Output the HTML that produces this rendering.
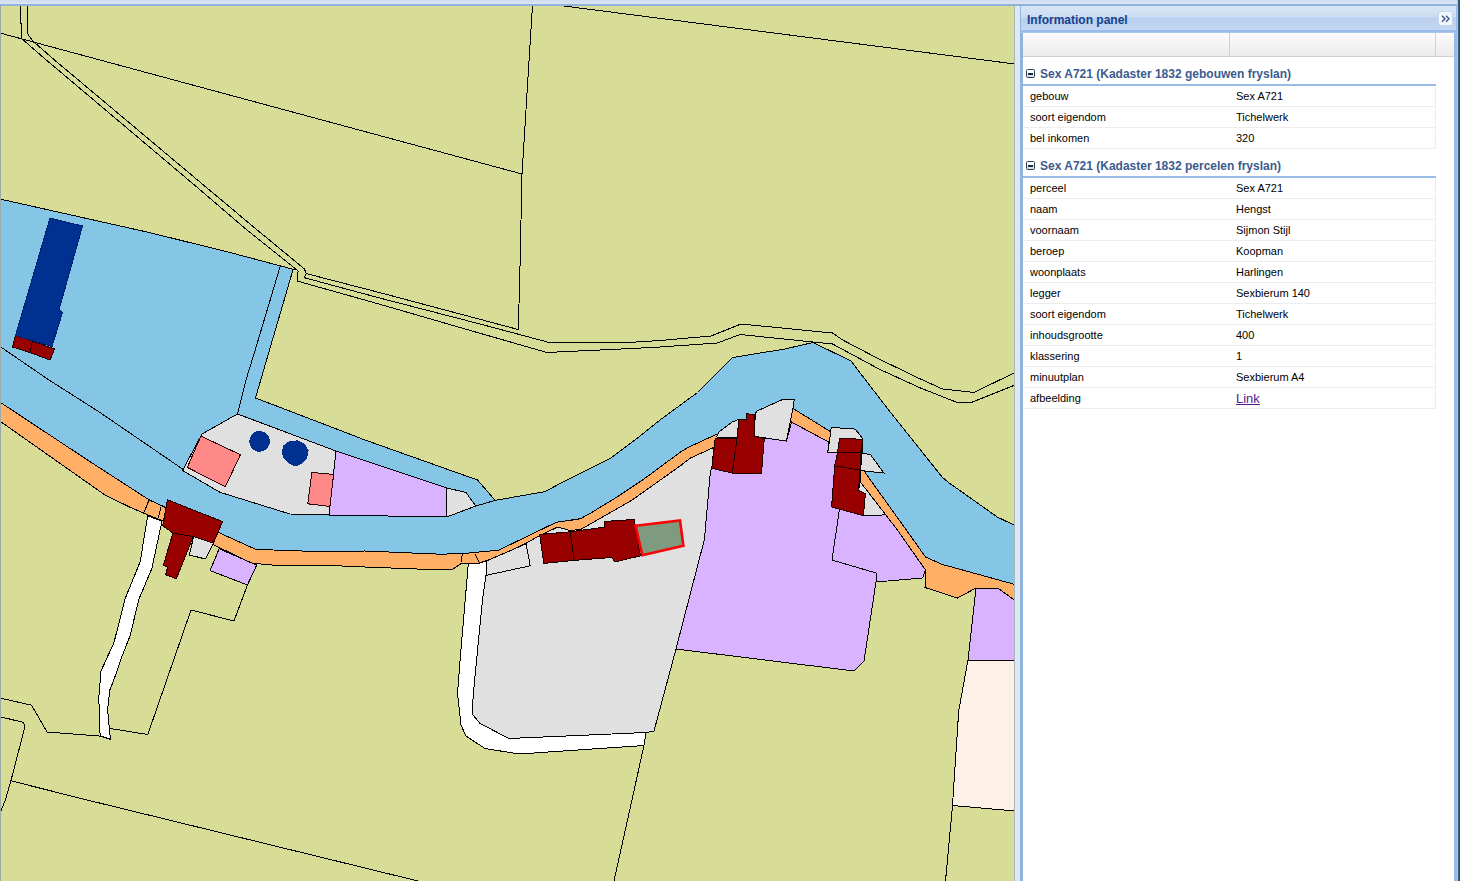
<!DOCTYPE html>
<html><head><meta charset="utf-8"><title>Information panel</title>
<style>
html,body{margin:0;padding:0;width:1460px;height:881px;overflow:hidden;background:#dfe8f6;font-family:"Liberation Sans",sans-serif;}
#top{position:absolute;left:0;top:0;width:1460px;height:4px;background:linear-gradient(#cfdcf0,#dbe5f5);}
#topline{position:absolute;left:0;top:4px;width:1460px;height:2px;background:#8fb4d8;}
#map{position:absolute;left:0;top:6px;width:1014px;height:875px;overflow:hidden;background:#d7dc97;}
#map svg{position:absolute;left:0;top:-6px;}
#mapleft{position:absolute;left:0;top:6px;width:1px;height:875px;background:#9aabaa;}
#split{position:absolute;left:1014px;top:6px;width:6px;height:875px;background:#dfe8f6;border-left:1px solid #a9b7b4;box-sizing:border-box;}
#panel{position:absolute;left:1020px;top:6px;width:437px;height:875px;background:#fff;border-left:3px solid #8fb4de;border-right:3px solid #99bbe8;box-sizing:border-box;}
#edge{position:absolute;left:1457px;top:0;width:3px;height:881px;background:linear-gradient(90deg,#a8c4ea 0,#a8c4ea 33%,#41627a 34%,#2c4a5e 100%);}
#phead{position:absolute;left:-2px;top:0;width:435px;height:24px;box-shadow:0 1px 0 #a9c6ec;background:linear-gradient(#dae6f6 0,#cddcf2 45%,#b9cfee 50%,#c3d6f1 100%);border-bottom:2px solid #99bbe8;}
#ptitle{position:absolute;left:6px;top:7px;font-weight:bold;font-size:12px;color:#15428b;white-space:nowrap;}
#tool{position:absolute;left:418px;top:6px;width:13px;height:13px;background:#f1f6fd;border-radius:2px;box-shadow:0 0 0 1px #c5d6ee;}
#ghead{position:absolute;left:0;top:27px;width:431px;height:23px;background:linear-gradient(#fbfbfb,#ececec);border-bottom:1px solid #d0d0d0;}
#ghead i{position:absolute;top:0;width:1px;height:23px;background:#d0d0d0;}
#gbody{position:absolute;left:0;top:51px;width:413px;}
.ghd{height:21px;padding-top:6px;border-bottom:2px solid #99bbe8;position:relative;}
.ghd span{position:absolute;left:17px;top:10px;font-weight:bold;font-size:12px;color:#3b5b8e;white-space:nowrap;}
.ghd b{position:absolute;left:3px;top:12px;width:7px;height:7px;border:1px solid #2c3c52;border-radius:1.5px;background:linear-gradient(#fff 40%,#cdd6e2);}
.ghd b:after{content:"";position:absolute;left:1px;top:3px;width:5px;height:2px;background:#1c2a3c;}
.row{height:19px;border-top:1px solid #fff;border-bottom:1px solid #ededed;border-right:1px solid #ededed;position:relative;font-size:11px;line-height:13px;color:#000;}
.c1{position:absolute;left:7px;top:3px;white-space:nowrap;}
.c2{position:absolute;left:213px;top:3px;white-space:nowrap;}
.c2 a{font-size:13px;color:#551a8b;text-decoration:underline;}
</style></head><body>
<div id="top"></div><div id="topline"></div>
<div id="map"><svg width="1015" height="881" viewBox="0 0 1015 881" shape-rendering="crispEdges">
<polygon points="-1,198.8 150,232.7 230,252.5 294,269.5 293,269.8 269.5,350 255.5,398 330,426.5 365,440 477.5,480 495.2,500.4 544.9,491.6 560,483.6 610.4,458.4 635,440 660,420 697.5,392.5 732.5,357.5 785,349 813,342.5 851,361 888.6,410 942.5,477.5 950,483.6 973.3,500 997.2,517 1015,525.5 1015,584.5 942.5,564.5 925.5,557 906.3,530 865.4,473 862,445 855,429 830.7,431.8 792.9,408.4 790,421 760,437 725,437 716.6,434.3 689.4,446.8 680.8,451.8 644.5,478.6 617,497 590,513.5 580.4,518.7 556.5,522.2 498.6,550.2 462.5,553.6 440,554.2 365,551 330,552 280,550.2 256,549.5 218.6,532.5 190,520 166.8,508 149,499.8 130,487.5 87.5,460 -1,401.5" fill="#85c5e5" stroke="#000"/>
<polygon points="-1,401.5 87.5,460 130,487.5 149,499.8 166.8,508 190,520 218.6,532.5 256,549.5 280,550.2 330,552 365,551 440,554.2 462.5,553.6 498.6,550.2 556.5,522.2 576.2,519.5 580.4,518.7 590,513.5 617,497 644.5,478.6 680.8,451.8 689.4,446.8 716.6,434.3 725,437 760,437 790,421 792.9,408.4 830.7,431.8 862,445 865.4,473 906.3,530 925.5,557 942.5,564.5 1015,584.5 1015,600.5 999,589 976,588 957.5,598 925,587.5 925.5,570 897.4,530 860,481.5 860,471 828.6,442 791.5,422 786.5,441 754,436.3 737,438 713.8,447.9 713.2,447.7 690,458.2 680.9,465.4 632.2,500 580.4,529.6 569.4,530.4 557.8,527 540.1,535.2 525.8,543.4 498.6,556.3 487,560.4 479.5,563.1 461.8,563.1 451.6,569.9 440,569.9 365,567 330,565.5 280,565.8 251.3,563.1 213.4,544.7 190,534 162.7,520.9 144.3,513.4 130,507.2 105,495 -1,420.5" fill="#ffb066" stroke="#000"/>
<polyline points="149,500.2 143.6,513.4" fill="none" stroke="#000"/>
<polyline points="161,507.2 158.3,518.1" fill="none" stroke="#000"/>
<polyline points="462.5,553.6 461.1,561.7" fill="none" stroke="#000"/>
<polyline points="474.7,553.6 479.5,563.1" fill="none" stroke="#000"/>
<polygon points="237.5,414 336,451 447,488 466,492.5 475.7,506 446.8,517 329,515 290,514 220,492.3 182.5,470.5 202,434" fill="#e0e0e0" stroke="#000"/>
<polygon points="336,451 447,488 446.8,517 329,515" fill="#d9b3ff" stroke="#000"/>
<polyline points="446.8,517 475.7,506 495.2,500.4" fill="none" stroke="#000"/>
<polyline points="0,346.5 49,380 100,412.5 184,470" fill="none" stroke="#000"/>
<polyline points="280.4,265.7 255.2,350 246,380 237.5,414" fill="none" stroke="#000"/>
<polygon points="200.9,436.1 240.4,454.7 225.4,486.7 187.3,467.4" fill="#ff8888" stroke="#2a0808"/>
<polygon points="311.9,472.4 333.6,474.5 329.9,506.5 307.8,503.8" fill="#ff8888" stroke="#2a0808"/>
<polygon points="194,535 214,542 205.6,559 189.3,555" fill="#e0e0e0" stroke="#000"/>
<polygon points="487,560.7 498.6,556.3 525.8,543.4 540.1,535.2 557.8,527 569.4,530.4 580.4,529.6 632.2,500 680.9,465.4 690,458.2 713.2,447.7 713.8,447.9 711.8,468.3 710.4,471.7 707,510 704.5,539 676,649 654,731 646,732.5 509,738.5 480,723.5 473,715 472.5,705 475,676 482.5,600 486,575.4" fill="#e0e0e0" stroke="#000"/>
<polygon points="487,560.7 526.1,543.8 530.2,565.8 486,575.4" fill="#e0e0e0" stroke="#000"/>
<polygon points="219.2,548.8 256.7,565.1 247.4,585 210.1,570.6" fill="#d9b3ff" stroke="#000"/>
<polygon points="713.8,447.9 737,436 754,436.3 786.5,441.1 791.5,422 828.6,442 827.9,452.2 837.5,452.5 834.7,465.9 831.6,507 839.5,508.8 863.4,515.6 885.8,514.9 897.4,530 925.5,570 922.5,578 876,582 864,661 854,671 676,649 704.5,539 707,510 710.4,471.7 711.8,468.3" fill="#d9b3ff" stroke="#000"/>
<polyline points="839.5,508.8 832,560 876,573 876,582" fill="none" stroke="#000"/>
<polygon points="976,588 999,589 1015,600.5 1015,660 968,660" fill="#d9b3ff" stroke="#000"/>
<polygon points="968,660 1015,660 1015,811 952.5,805.5 958.7,711" fill="#fdf0e6" stroke="#000"/>
<polygon points="716.6,437 718.6,432.2 732.2,422 739,419.3 737,437.7" fill="#e0e0e0" stroke="#000"/>
<polygon points="756.8,411.1 782.6,399.5 794.2,399.5 792.9,408.4 786.5,441.1 754,436.3 755.4,413.8" fill="#e0e0e0" stroke="#000"/>
<polygon points="831.3,427.4 855.2,429.1 862.7,438.6 861.3,452.2 827.9,452.2 829.3,442" fill="#e0e0e0" stroke="#000"/>
<polygon points="862,452.9 870.8,455 883.8,473 860.6,470.6" fill="#e0e0e0" stroke="#000"/>
<polygon points="860,481.5 885.8,514.9 863.4,515.6 865.4,493.8 858.6,490.4" fill="#e0e0e0" stroke="#000"/>
<polygon points="147.7,515.8 140.2,561.7 125,599 114,642.5 101,671 98.8,697.7 100.1,735.9 110.4,739.3 107.6,710 109.7,690.2 113.8,680 122.5,655 130,636 139,599 151.8,568.6 162,521.2" fill="#ffffff" stroke="#000"/>
<polygon points="468.3,563.8 465.2,600 460,661 457.5,693.5 461,725 466,736 485,748.5 519,754 644,745.5 646,732.5 509,738.5 480,723.5 473,715 472.5,705 475,676 482.5,600 486,575.4 487,560.7 479.5,563.1" fill="#ffffff" stroke="#000"/>
<polygon points="167.5,499.8 222.6,521.6 213.4,543 193.4,536.5 176.3,578.8 165.7,574.7 167.5,567.2 163.4,565.1 172.9,533.1 162.7,525.6" fill="#990000" stroke="#1c0000"/>
<polygon points="539.7,534.5 570.1,531.8 574.2,560.4 543.8,563.4" fill="#990000" stroke="#1c0000"/>
<polygon points="570.1,531.8 604.3,527.2 604.3,521.5 634.3,519.4 640.4,555.8 615,562 612,557.5 574.2,560.4" fill="#990000" stroke="#1c0000"/>
<polygon points="715.2,438.4 737,438.4 732.2,473.1 711.8,468.3" fill="#990000" stroke="#1c0000"/>
<polygon points="739,419.3 746.5,420 746.5,413.8 754.7,414.5 754,436.3 764.3,438.4 761.5,473.1 732.2,473.1 737,438.4" fill="#990000" stroke="#1c0000"/>
<polygon points="839.5,438.3 862.7,439.3 860.6,452.5 837.5,452.5" fill="#990000" stroke="#1c0000"/>
<polygon points="837.5,452.5 860.6,452.5 860,470 834.7,465.9" fill="#990000" stroke="#1c0000"/>
<polygon points="834.7,465.9 860,470 858.6,490.4 865.4,493.8 863.4,515.6 831.6,507" fill="#990000" stroke="#1c0000"/>
<polyline points="172.9,533.1 193.4,536.5" fill="none" stroke="#1c0000"/>
<polygon points="15.5,335 32.5,341 30,352.5 12.5,347" fill="#990000" stroke="#1c0000"/>
<polygon points="32.5,341 54.5,349 50,360 30,352.5" fill="#990000" stroke="#1c0000"/>
<polygon points="50,218 82.5,226 59,310 62.5,312.5 52,346.5 15.5,335.5" fill="#003090" stroke="#002070"/>
<polygon points="635.6,525.8 680,520.4 683.4,545.8 642.3,555.2" fill="#7f9b7f" stroke="#f80404" stroke-width="2.6" shape-rendering="geometricPrecision"/>
<polyline points="20.5,5 20.5,23 21.5,24 21.5,38.5 46.3,60 188.5,180 247,230 298.1,270.9 297.4,281.1 380,304.3 480,333.3 546.8,352.4 557,352 630,348.6 660,347 717.5,343 740,334.5 832.5,344 880,369.5 920,387.8 956,402 972.5,402 1015,385" fill="none" stroke="#000"/>
<polyline points="27.6,5 27.6,33.7 32.7,40.9 54.5,60 197.5,180 257.2,230 304.3,268.8 306.3,273.6 380,292.7 480,319.3 518.1,329.5" fill="none" stroke="#000"/>
<polyline points="306.3,273.6 304.3,277.7 380,298.1 480,324 548.1,342.2 630,342.4 660,340.5 711,336 741,324 832.5,333 842.7,340 878,358.5 920,378.8 942.5,389 974,392.5 1015,372.5" fill="none" stroke="#000"/>
<polyline points="0,33 522,174" fill="none" stroke="#000"/>
<polyline points="532.5,5 522,174 521,220 519.5,290 518.1,329.5" fill="none" stroke="#000"/>
<polyline points="560,5.5 1015,64" fill="none" stroke="#000"/>
<polyline points="0,698 31.6,705.2 47,732 100.1,736.1" fill="none" stroke="#000"/>
<polyline points="0,716.7 23.8,722.5 24.5,728.4 10.9,780.8 5.4,800 0,813" fill="none" stroke="#000"/>
<polyline points="10.9,780.8 87.2,800 365,868 418,881" fill="none" stroke="#000"/>
<polyline points="109.7,728.4 147.8,734.5 191,610 234,621 247.4,585" fill="none" stroke="#000"/>
<polyline points="646,732.5 644,745.5 614,881" fill="none" stroke="#000"/>
<polyline points="976,588 968,660 958.7,711 952.5,805.5 945.5,881" fill="none" stroke="#000"/>
<circle cx="259.6" cy="441.4" r="10.4" fill="#003090"/><polygon points="284,445.9 289.4,441.8 297.6,441.1 304.4,444.5 307.8,450.6 306.5,457.5 301.7,462.9 295.6,465.6 289.4,462.9 284,457.5 282.6,452" fill="#003090" stroke="#003090" stroke-linejoin="round" stroke-width="1.5"/>
</svg></div>
<div id="mapleft"></div>
<div id="split"></div>
<div id="panel">
<div id="phead"><div id="ptitle">Information panel</div><div id="tool"><svg width="13" height="13" viewBox="0 0 13 13"><path d="M3 2.7l3 3-3 3M7 2.7l3 3-3 3" fill="none" stroke="#3d5a85" stroke-width="1.4"/></svg></div></div>
<div id="ghead"><i style="left:206px"></i><i style="left:412px"></i></div>
<div id="gbody">
<div class="ghd"><b></b><span>Sex A721 (Kadaster 1832 gebouwen fryslan)</span></div>
<div class="row"><div class="c1">gebouw</div><div class="c2">Sex A721</div></div>
<div class="row"><div class="c1">soort eigendom</div><div class="c2">Tichelwerk</div></div>
<div class="row"><div class="c1">bel inkomen</div><div class="c2">320</div></div>
<div class="ghd"><b></b><span>Sex A721 (Kadaster 1832 percelen fryslan)</span></div>
<div class="row"><div class="c1">perceel</div><div class="c2">Sex A721</div></div>
<div class="row"><div class="c1">naam</div><div class="c2">Hengst</div></div>
<div class="row"><div class="c1">voornaam</div><div class="c2">Sijmon Stijl</div></div>
<div class="row"><div class="c1">beroep</div><div class="c2">Koopman</div></div>
<div class="row"><div class="c1">woonplaats</div><div class="c2">Harlingen</div></div>
<div class="row"><div class="c1">legger</div><div class="c2">Sexbierum 140</div></div>
<div class="row"><div class="c1">soort eigendom</div><div class="c2">Tichelwerk</div></div>
<div class="row"><div class="c1">inhoudsgrootte</div><div class="c2">400</div></div>
<div class="row"><div class="c1">klassering</div><div class="c2">1</div></div>
<div class="row"><div class="c1">minuutplan</div><div class="c2">Sexbierum A4</div></div>
<div class="row"><div class="c1">afbeelding</div><div class="c2"><a href="#">Link</a></div></div>
</div>
</div>
<div id="edge"></div>
</body></html>
